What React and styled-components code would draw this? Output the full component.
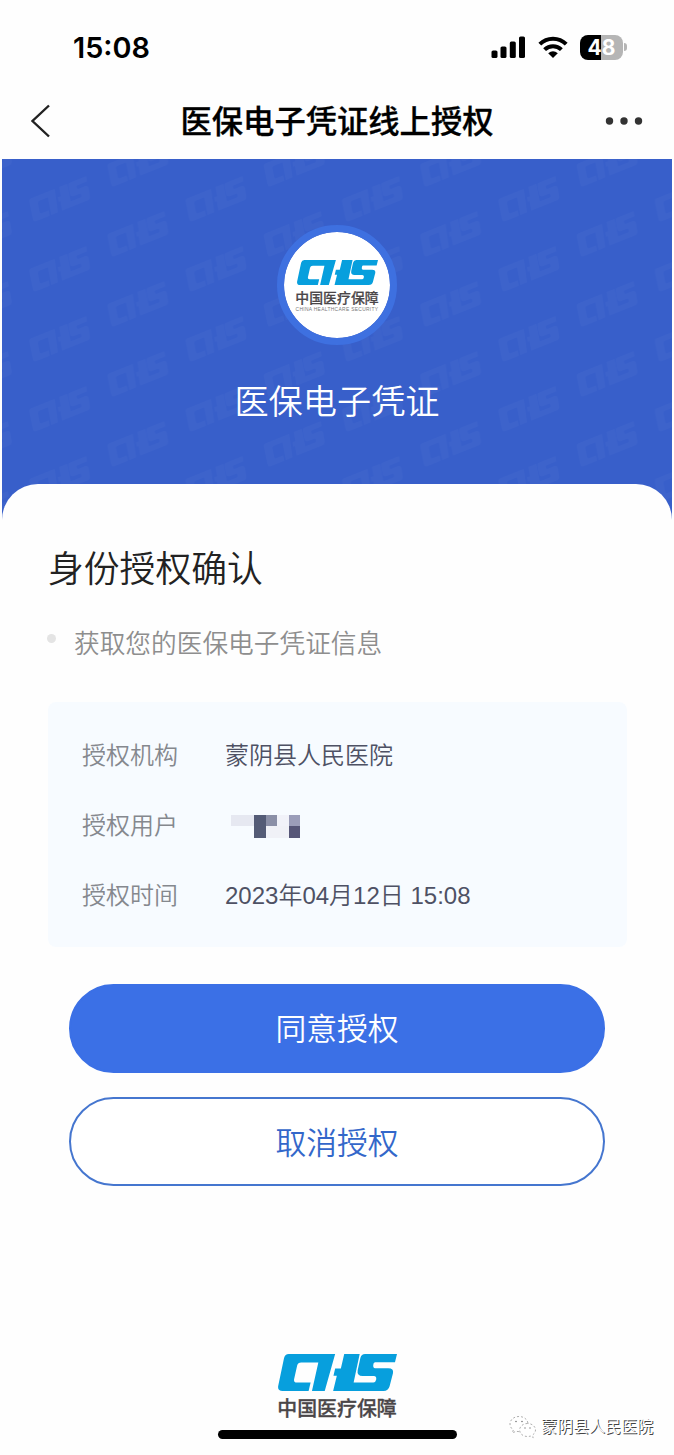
import React from "react";
import styled, { createGlobalStyle } from "styled-components";

const details = [
  { label: "授权机构", value: "蒙阴县人民医院" },
  { label: "授权用户", masked: true },
  { label: "授权时间", value: "2023年04月12日 15:08" },
];

// colours of the mosaic over the user's name, row by row
const mosaic = [
  ["#e6e8f1", "#e6e8f1", "#545b76", "#8b8fa7", "#f1f2f9", "#9b9db9"],
  ["transparent", "transparent", "#545b76", "#f0f1f7", "#f0f1f7", "#565678"],
];

const ChsShape = () => (
  <g>
    <path d="M32 0H170L139 109H101L120 25H69Q59 25 57 34L48 74Q46 84 56 84H97L91 109H14Q-3 109 1 92L18 12Q21 0 32 0Z" />
    <path d="M197 0H243L225 84H284Q290 84 292 76Q294 65 285 65H252Q234 65 237 48L245 12Q248 0 259 0H354L348 24H289Q285 24 284 29Q281 42 289 42H328Q345 42 342 57L332 95Q328 109 314 109H164L175 64H165L170 43H187Z" />
  </g>
);

const ChsLogo = ({ width, height }) => (
  <svg width={width} height={height} viewBox="0 0 354 109" preserveAspectRatio="none" fill="#079fdd">
    <ChsShape />
  </svg>
);

const SignalIcon = () => (
  <svg width="35" height="22" viewBox="0 0 35 22" fill="#000">
    <rect x="0.5" y="14.5" width="6" height="7.5" rx="1.6" />
    <rect x="9.5" y="10.5" width="6" height="11.5" rx="1.6" />
    <rect x="18.8" y="5.5" width="6" height="16.5" rx="1.6" />
    <rect x="28" y="0.5" width="6" height="21.5" rx="1.6" />
  </svg>
);

const WifiIcon = () => (
  <svg width="30" height="22" viewBox="0 0 30 22" fill="none" stroke="#000" strokeWidth="4">
    <path d="M1.8 8.2A18.6 18.6 0 0 1 28.2 8.2" />
    <path d="M6.6 13.6A12 12 0 0 1 23.4 13.6" />
    <path d="M15 22L10.2 17.2Q15 13.4 19.8 17.2Z" fill="#000" stroke="none" />
  </svg>
);

const BackIcon = () => (
  <svg width="20" height="34" viewBox="0 0 20 34" fill="none" stroke="#222" strokeWidth="2.4">
    <path d="M18 1.5L1.5 17L18 32.5" />
  </svg>
);

const MoreIcon = () => (
  <svg width="38" height="8" viewBox="0 0 38 8" fill="#333">
    <circle cx="4.5" cy="4" r="3.7" />
    <circle cx="19" cy="4" r="3.7" />
    <circle cx="33.5" cy="4" r="3.7" />
  </svg>
);

const WechatIcon = () => (
  <svg width="28" height="24" viewBox="0 0 28 24" fill="#fff" stroke="#999" strokeWidth="0.8" strokeDasharray="2 2">
    <path d="M10 1.5C5 1.5 1 4.7 1 9C1 11.5 2.3 13.5 4.3 14.9L3.5 18L7 16.2C8 16.5 9 16.6 10 16.6C15 16.6 19 13.2 19 9C19 4.7 15 1.5 10 1.5Z" />
    <path d="M18.5 8.5C14 8.5 10.6 11.4 10.6 15C10.6 18.7 14 21.5 18.5 21.5C19.5 21.5 20.4 21.4 21.3 21.1L24.2 22.7L23.5 20C25.4 18.8 26.5 17 26.5 15C26.5 11.4 23 8.5 18.5 8.5Z" />
    <g fill="#777" stroke="none">
      <circle cx="7" cy="6.5" r="0.8" />
      <circle cx="13" cy="6.5" r="0.8" />
      <circle cx="16" cy="13" r="0.7" />
      <circle cx="21" cy="13" r="0.7" />
    </g>
  </svg>
);

const HeroPattern = () => (
  <PatternSvg width="670" height="360">
    <defs>
      <g id="chs-mark" transform="rotate(-22) scale(0.185 0.21) translate(-177 -54)">
        <ChsShape />
      </g>
      <pattern id="chs-tile" x="18" width="156.4" height="70" patternUnits="userSpaceOnUse">
        <use href="#chs-mark" x="40" y="40" />
        <use href="#chs-mark" x="118.2" y="75" />
        <use href="#chs-mark" x="118.2" y="5" />
      </pattern>
    </defs>
    <rect width="670" height="360" fill="url(#chs-tile)" />
  </PatternSvg>
);

const App = () => {
  return (
    <Page>
      <GlobalStyle />
      <StatusBar>
        <Time>15:08</Time>
        <StatusIcons>
          <SignalIcon />
          <WifiIcon />
          <Battery>
            <BatteryBody>48</BatteryBody>
            <BatteryTip />
          </Battery>
        </StatusIcons>
      </StatusBar>
      <NavBar>
        <BackIcon />
        <NavTitle>医保电子凭证线上授权</NavTitle>
        <MoreIcon />
      </NavBar>
      <Hero>
        <HeroPattern />
        <Badge>
          <ChsLogo width={81} height={25} />
          <BadgeName>中国医疗保障</BadgeName>
          <BadgeCaption>CHINA HEALTHCARE SECURITY</BadgeCaption>
        </Badge>
        <HeroTitle>医保电子凭证</HeroTitle>
      </Hero>
      <Sheet>
        <Heading>身份授权确认</Heading>
        <Scope>
          <Bullet />
          获取您的医保电子凭证信息
        </Scope>
        <Details>
          {details.map((item) => (
            <Row key={item.label}>
              <Label>{item.label}</Label>
              {item.masked ? (
                <Mosaic>
                  {mosaic.flat().map((color, i) => (
                    <Cell key={i} $color={color} />
                  ))}
                </Mosaic>
              ) : (
                <Value>{item.value}</Value>
              )}
            </Row>
          ))}
        </Details>
        <Buttons>
          <Button $primary>同意授权</Button>
          <Button>取消授权</Button>
        </Buttons>
      </Sheet>
      <Footer>
        <ChsLogo width={119} height={37} />
        <FooterName>中国医疗保障</FooterName>
        <HomeIndicator />
        <Account>
          <WechatIcon />
          蒙阴县人民医院
        </Account>
      </Footer>
    </Page>
  );
};

const GlobalStyle = createGlobalStyle`
  * {
    box-sizing: border-box;
  }
  body {
    margin: 0;
    background: #fefefe;
    font-family: "Liberation Sans", "Noto Sans CJK SC", sans-serif;
  }
  svg {
    display: block;
    flex-shrink: 0;
  }
`;

const Page = styled.div`
  display: flex;
  flex-direction: column;
  width: 674px;
  height: 1455px;
  overflow: hidden;
`;

const StatusBar = styled.div`
  display: flex;
  justify-content: space-between;
  align-items: center;
  height: 94px;
  padding: 0 47px 0 73px;
`;

const Time = styled.div`
  font-family: Inter, sans-serif;
  font-size: 28.8px;
  font-weight: 600;
`;

const StatusIcons = styled.div`
  display: flex;
  align-items: center;
  gap: 12px;
`;

const Battery = styled.div`
  display: flex;
  align-items: center;
  gap: 1px;
`;

const BatteryBody = styled.div`
  width: 43px;
  height: 25px;
  border-radius: 8px;
  background: linear-gradient(to right, #000 48%, #b5b5b5 48%);
  color: #fff;
  font-family: Inter, sans-serif;
  font-size: 21px;
  font-weight: 700;
  line-height: 25px;
  text-align: center;
`;

const BatteryTip = styled.div`
  width: 3px;
  height: 8px;
  border-radius: 0 3px 3px 0;
  background: #b5b5b5;
`;

const NavBar = styled.div`
  display: grid;
  grid-template-columns: 38px 1fr 38px;
  align-items: center;
  height: 65px;
  padding: 0 31px 12px;
`;

const NavTitle = styled.div`
  padding-top: 4px;
  font-size: 31.3px;
  font-weight: 500;
  line-height: 44px;
  text-align: center;
  -webkit-text-stroke: 0.3px #000;
`;

const Hero = styled.div`
  position: relative;
  display: flex;
  flex-direction: column;
  align-items: center;
  height: 365px;
  margin: 0 2px;
  padding-top: 66px;
  background: #385fca;
  flex-shrink: 0;
`;

const PatternSvg = styled.svg`
  position: absolute;
  top: 0;
  left: 0;
  fill: rgba(255, 255, 255, 0.026);
`;

const Badge = styled.div`
  position: relative;
  display: flex;
  flex-direction: column;
  align-items: center;
  width: 120px;
  height: 120px;
  padding-top: 28px;
  border: 7px solid #3e70e0;
  border-radius: 50%;
  background: #fff;
  background-clip: padding-box;
`;

const BadgeName = styled.div`
  margin-top: 4px;
  color: #4a4648;
  font-size: 13.9px;
  font-weight: 500;
  line-height: 18px;
  white-space: nowrap;
  -webkit-text-stroke: 0.2px #4a4648;
`;

const BadgeCaption = styled.div`
  color: #777;
  font-size: 4.9px;
  line-height: 5px;
  letter-spacing: 0.32px;
  white-space: nowrap;
`;

const HeroTitle = styled.div`
  position: relative;
  margin-top: 32px;
  color: #fff;
  font-size: 34.2px;
  font-weight: 350;
  line-height: 50px;
`;

const Sheet = styled.div`
  position: relative;
  height: 830px;
  margin: -40px 2px 0;
  padding: 60px 45px 0 46px;
  border-radius: 36px 36px 0 0;
  background: #fefefe;
  flex-shrink: 0;
`;

const Heading = styled.div`
  color: #222;
  font-size: 35.8px;
  font-weight: 350;
  line-height: 52px;
`;

const Scope = styled.div`
  display: flex;
  align-items: center;
  margin-top: 28px;
  color: #8e8e8e;
  font-size: 25.7px;
  font-weight: 350;
  line-height: 40px;
`;

const Bullet = styled.span`
  width: 9px;
  height: 9px;
  margin: -11px 18px 0 -1px;
  border-radius: 50%;
  background: #e4e4e4;
`;

const Details = styled.div`
  height: 245px;
  margin-top: 38px;
  padding: 16px 34px;
  border-radius: 8px;
  background: #f7fbff;
`;

const Row = styled.div`
  display: flex;
  align-items: center;
  height: 70px;
  font-size: 24px;
  font-weight: 350;
`;

const Label = styled.div`
  width: 143px;
  color: #85888e;
`;

const Value = styled.div`
  color: #4e5164;
`;

const Mosaic = styled.div`
  display: grid;
  grid-template-columns: repeat(6, 11.5px);
  grid-template-rows: repeat(2, 11.5px);
  margin: 6px 0 0 6px;
`;

const Cell = styled.div`
  background: ${(props) => props.$color};
`;

const Buttons = styled.div`
  display: flex;
  flex-direction: column;
  gap: 24px;
  margin-top: 37px;
  padding: 0 22px 0 21px;
`;

const Button = styled.button`
  height: 89px;
  padding: 0 0 ${(props) => (props.$primary ? "5px" : "3px")};
  border: 2px solid ${(props) => (props.$primary ? "#3b70e6" : "#4576cf")};
  border-radius: 45px;
  background: ${(props) => (props.$primary ? "#3b70e6" : "#fff")};
  color: ${(props) => (props.$primary ? "#fff" : "#3367ca")};
  font-family: inherit;
  font-size: 30.8px;
  font-weight: 350;
`;

const Footer = styled.div`
  position: relative;
  display: flex;
  flex-direction: column;
  align-items: center;
  padding-top: 40px;
`;

const FooterName = styled.div`
  margin-top: 4px;
  color: #4a4648;
  font-size: 19.9px;
  font-weight: 500;
  line-height: 28px;
  -webkit-text-stroke: 0.3px #4a4648;
`;

const HomeIndicator = styled.div`
  width: 239px;
  height: 9px;
  margin-top: 7px;
  border-radius: 5px;
  background: #000;
`;

const Account = styled.div`
  position: absolute;
  right: 21px;
  bottom: 0;
  display: flex;
  align-items: center;
  gap: 4px;
  color: #fff;
  font-size: 16px;
  line-height: 24px;
  text-shadow: 1px 1px 0 #444;
`;

export default App;
